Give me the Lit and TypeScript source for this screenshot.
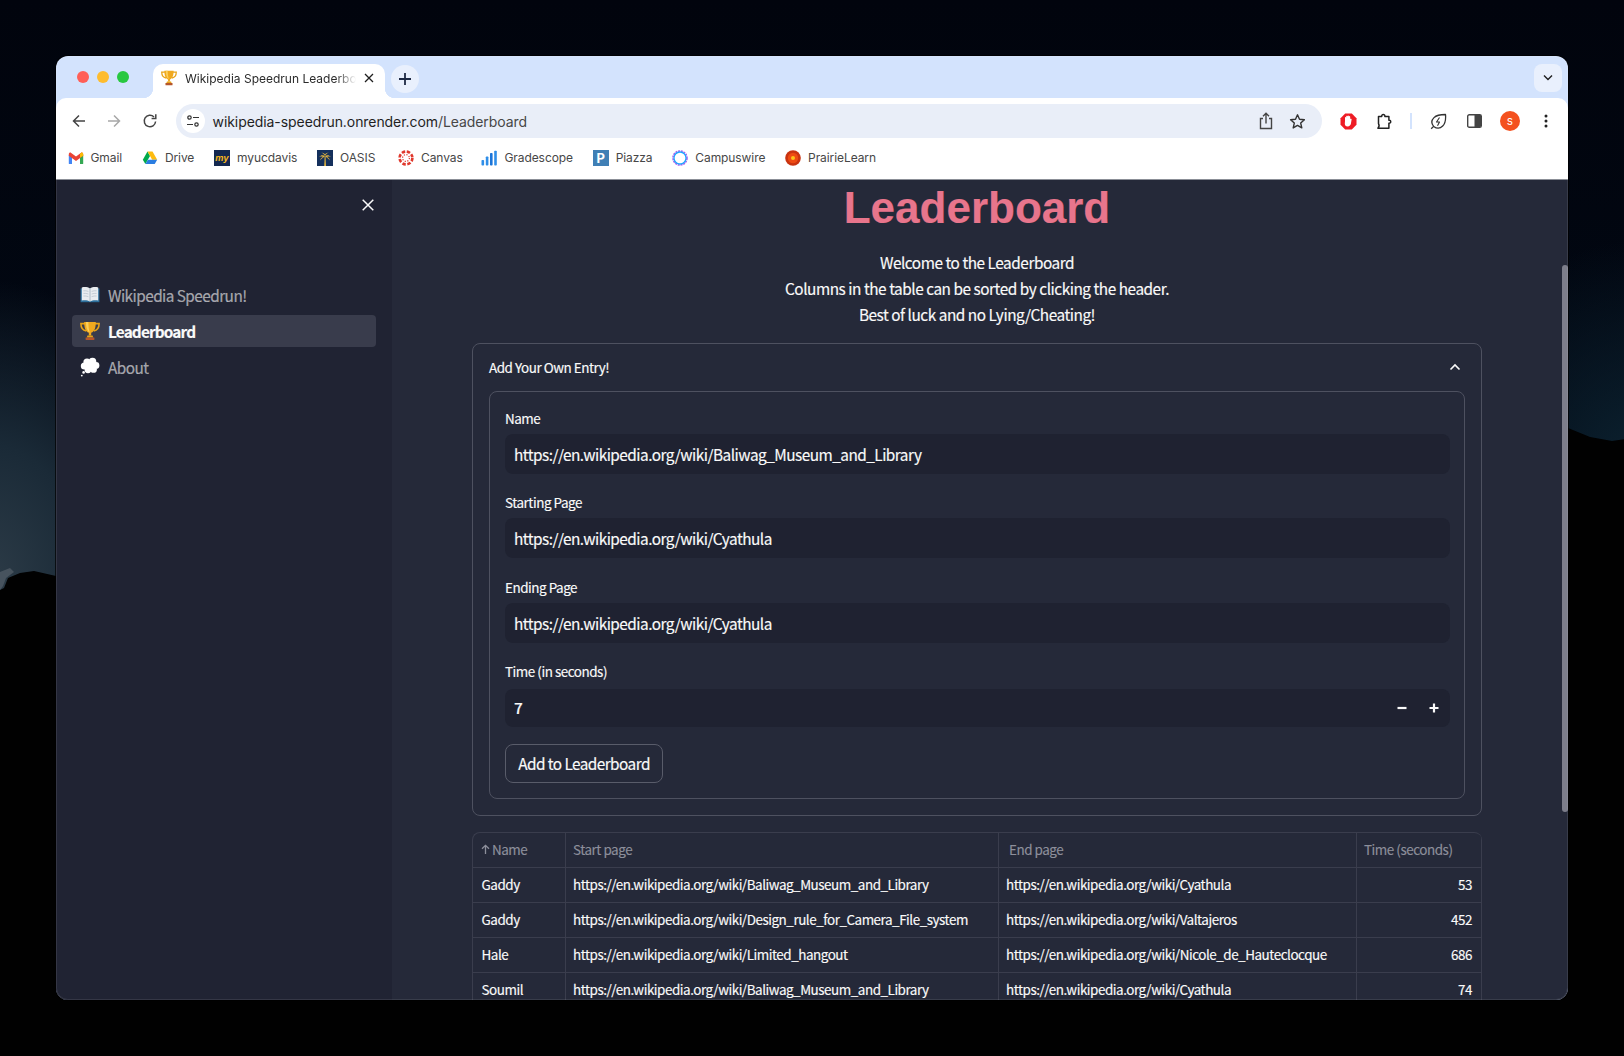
import { LitElement, css, html } from 'lit'
import { customElement, state } from 'lit/decorators.js'

interface Entry {
  name: string
  start: string
  end: string
  time: number
}

const WIKI = 'https://en.wikipedia.org/wiki/'

const ENTRIES: Entry[] = [
  { name: 'Gaddy', start: 'Baliwag_Museum_and_Library', end: 'Cyathula', time: 53 },
  { name: 'Gaddy', start: 'Design_rule_for_Camera_File_system', end: 'Valtajeros', time: 452 },
  { name: 'Hale', start: 'Limited_hangout', end: 'Nicole_de_Hauteclocque', time: 686 },
  { name: 'Soumil', start: 'Baliwag_Museum_and_Library', end: 'Cyathula', time: 74 },
]

const trophy = (size: number) => html`<svg width=${size} height=${size} viewBox="0 0 20 20">
  <path d="M5 2.600H.9c0 4 1.700 6.800 5.300 7.400M15 2.600h4.100c0 4-1.700 6.800-5.300 7.400" fill="none" stroke="#e8a317" stroke-width="1.600"/>
  <path d="M4.200 1h11.600c0 5.400-1 9.600-4.600 10.800v2.600H8.800v-2.600C5.200 10.600 4.200 6.400 4.200 1z" fill="#f0a91e"/>
  <path d="M6 1h2.400c0 4 .4 7.600 1.400 10.600C7 10 6 6 6 1z" fill="#fbcf5c"/>
  <path d="M7.400 14.400h5.200l.6 2H6.800z" fill="#e8a317"/>
  <rect x="5.600" y="16.400" width="8.800" height="2.600" rx=".4" fill="#b5562a"/>
</svg>`

const book = html`<svg width="20" height="20" viewBox="0 0 20 20">
  <path d="M.6 3.400h18.800v13.800H.6z" fill="#2d6f9c"/>
  <path d="M1.800 2.400c3-.6 6-.4 8.200 1 2.200-1.400 5.200-1.600 8.200-1v13c-3-.5-6-.3-8.200 1-2.200-1.300-5.200-1.500-8.200-1z" fill="#e9edf0"/>
  <path d="M10 3.400v13" stroke="#9fb0bb" stroke-width=".8"/>
  <path d="M3.400 5.800c1.600-.2 3.200 0 5 .6M3.400 8.400c1.600-.2 3.200 0 5 .6M3.400 11c1.600-.2 3.200 0 5 .6M16.600 5.800c-1.600-.2-3.200 0-5 .6M16.600 8.400c-1.600-.2-3.200 0-5 .6M16.600 11c-1.600-.2-3.200 0-5 .6" stroke="#b4c0c8" stroke-width=".7" fill="none"/>
</svg>`

const balloon = html`<svg width="20" height="20" viewBox="0 0 20 20" fill="#fff">
  <circle cx="7" cy="5" r="3.600"/><circle cx="12.500" cy="4.600" r="3.800"/><circle cx="16" cy="8.400" r="3.400"/>
  <circle cx="13.500" cy="12.400" r="3.400"/><circle cx="8" cy="12.800" r="3.400"/><circle cx="4.400" cy="9" r="3.600"/>
  <circle cx="10" cy="8.400" r="5"/>
  <circle cx="3.600" cy="15.400" r="1.300"/><circle cx="1.800" cy="18.600" r=".9"/>
</svg>`

const bookmarkIcons: Record<string, unknown> = {
  Gmail: html`<svg width="16" height="16" viewBox="0 0 16 16">
    <rect x=".8" y="5" width="3.200" height="9" rx=".6" fill="#4285f4"/>
    <rect x="12" y="5" width="3.200" height="9" rx=".6" fill="#34a853"/>
    <path d="M.8 5.800V4.200c0-1.300 1.400-2 2.400-1.300L8 6.500l4.800-3.600c1-.7 2.400 0 2.400 1.300v1.600L8 11z" fill="#ea4335"/>
    <path d="M12 4v3.800l3.200-2V4.200c0-1.300-1.400-2-2.400-1.300z" fill="#fbbc04"/>
  </svg>`,
  Drive: html`<svg width="16" height="16" viewBox="0 0 16 16">
    <path d="M5.500 1.600L8 6 3.400 14 .8 9.700z" fill="#00a94b"/>
    <path d="M5.500 1.600h5l4.700 8.100h-5z" fill="#fdbb10"/>
    <path d="M3.400 14l2.500-4.300h9.300L12.700 14z" fill="#2a7de1"/>
  </svg>`,
  myucdavis: html`<span class="badge my">my</span>`,
  OASIS: html`<svg width="16" height="16" viewBox="0 0 16 16">
    <rect width="16" height="16" fill="#14305c"/>
    <path d="M7.200 16c.2-3 .4-6 .4-9h1c0 3 .2 6 .4 9z" fill="#e5b53c"/>
    <path d="M8 6.500C6.500 4.800 4 5 2 7c1.600-.6 3-.6 4 0-1.400.4-2.400 1.500-2.800 3.400C4.400 8.800 6 7.600 8 6.500c2 1.100 3.600 2.300 4.800 3.900C12.400 8.500 11.400 7.400 10 7c1-.6 2.400-.6 4 0-2-2-4.500-2.200-6-.5zM8 6C7 4.500 5.800 3.200 4 2.600c1.500.1 3 .7 4 1.900 1-1.200 2.500-1.800 4-1.900C10.200 3.200 9 4.500 8 6z" fill="#e5b53c"/>
  </svg>`,
  Canvas: html`<svg width="16" height="16" viewBox="0 0 16 16" fill="none" stroke="#e0382c">
    <circle cx="8" cy="8" r="6.400" stroke-width="2.600" stroke-dasharray="3.400 1.630"/>
    <circle cx="8" cy="8" r="3.400" stroke-width="1.200" stroke-dasharray="1.200 1.470"/>
  </svg>`,
  Gradescope: html`<svg width="16" height="16" viewBox="0 0 16 16" fill="#2f8ee8">
    <rect x=".5" y="10" width="2.600" height="5.500" rx=".8"/>
    <rect x="4.800" y="6.500" width="2.600" height="9" rx=".8"/>
    <rect x="9" y="3" width="2.600" height="12.500" rx=".8" fill="#1c75d8"/>
    <rect x="13.200" y=".8" width="2.600" height="14.700" rx=".8"/>
  </svg>`,
  Piazza: html`<span class="badge piazza">P</span>`,
  Campuswire: html`<svg width="16" height="16" viewBox="0 0 16 16">
    <circle cx="8" cy="8" r="7" fill="#fff" stroke="#a65cf0" stroke-width="1.600" stroke-dasharray="2 .8"/>
    <circle cx="8" cy="8" r="6" fill="#fff" stroke="#1fa8ff" stroke-width="1.300"/>
  </svg>`,
  PrairieLearn: html`<svg width="16" height="16" viewBox="0 0 16 16">
    <circle cx="8" cy="8" r="7.800" fill="#c93310"/>
    <circle cx="8" cy="8" r="5.200" fill="#ee4a12"/>
    <circle cx="8" cy="8" r="2" fill="#fbc21a"/>
  </svg>`,
}

const BOOKMARKS = Object.keys(bookmarkIcons)

@customElement('app-root')
export class AppRoot extends LitElement {
  @state() private _time = 7

  private _field(label: string, value: string) {
    return html`
      <div class="field">
        <label>${label}</label>
        <div class="input">${value}</div>
      </div>
    `
  }

  private _browserChrome() {
    return html`
      <div class="tabstrip">
        <div class="lights">
          <i style="background:#ff5f57"></i><i style="background:#febc2e"></i><i style="background:#28c840"></i>
        </div>
        <div class="tab">
          ${trophy(16)}
          <span class="tab-title">Wikipedia Speedrun Leaderboard</span>
          <svg class="tab-close" width="10" height="10" viewBox="0 0 10 10" stroke="#1f1f1f" stroke-width="1.300"><path d="M1 1l8 8M9 1l-8 8"/></svg>
        </div>
        <div class="newtab">
          <svg width="14" height="14" viewBox="0 0 14 14" stroke="#1f2a44" stroke-width="1.800"><path d="M7 1v12M1 7h12"/></svg>
        </div>
        <div class="tabsearch">
          <svg width="12" height="8" viewBox="0 0 12 8" fill="none" stroke="#1f1f1f" stroke-width="1.400"><path d="M2 1.500l4 4 4-4"/></svg>
        </div>
      </div>
      <div class="toolbar">
        <div class="tool">
          <svg width="16" height="16" viewBox="0 0 16 16" fill="none" stroke="#444" stroke-width="1.500"><path d="M14 8H2.500M8 2.500L2.500 8 8 13.500"/></svg>
        </div>
        <div class="tool">
          <svg width="16" height="16" viewBox="0 0 16 16" fill="none" stroke="#a8a8a8" stroke-width="1.500"><path d="M2 8h11.500M8 2.500L13.500 8 8 13.500"/></svg>
        </div>
        <div class="tool reload">
          <svg width="16" height="16" viewBox="0 0 16 16" fill="none" stroke="#444" stroke-width="1.500"><path d="M13.600 8.500A5.700 5.700 0 1 1 12 4"/><path d="M13.800 1.200v4.200H9.600" stroke-linejoin="miter"/></svg>
        </div>
        <div class="pill">
          <div class="siteinfo">
            <svg width="14" height="14" viewBox="0 0 14 14" fill="none" stroke="#333" stroke-width="1.200">
              <circle cx="3.500" cy="3.500" r="1.700"/><path d="M7 3.500h6M1 10.500h6"/><circle cx="10.500" cy="10.500" r="1.700"/>
            </svg>
          </div>
          <span class="url">wikipedia-speedrun.onrender.com<span class="url-path">/Leaderboard</span></span>
          <div class="pill-tool">
            <svg width="16" height="18" viewBox="0 0 16 18" fill="none" stroke="#444" stroke-width="1.400"><path d="M5 6.500H2.500v10h11v-10H11M8 11.500V1.500M5 4.200l3-3 3 3"/></svg>
          </div>
          <div class="pill-tool">
            <svg width="17" height="17" viewBox="0 0 17 17" fill="none" stroke="#333" stroke-width="1.400" stroke-linejoin="round"><path d="M8.500 1.800l2 4.500 4.900.5-3.700 3.300 1.100 4.800-4.300-2.500-4.300 2.500 1.100-4.800L1.600 6.800l4.900-.5z"/></svg>
          </div>
        </div>
        <div class="slot">
          <svg width="17" height="17" viewBox="0 0 17 17">
            <path d="M5.200.5h6.600l4.700 4.700v6.600l-4.700 4.700H5.200L.5 11.800V5.200z" fill="#ee1c25"/>
            <path d="M5 8V4.700c0-.9 1.200-.9 1.200 0V3.500c0-.9 1.300-.9 1.300 0v-.3c0-.9 1.400-.9 1.400 0v.5c0-.9 1.300-.9 1.300 0V6c.3-.6 1.600-.4 1.400.5l-.7 4.300c-.3 1.500-1.300 2.600-3.200 2.600-2 0-2.900-1.200-2.900-3z" fill="#fff"/>
          </svg>
        </div>
        <div class="slot">
          <svg width="17" height="17" viewBox="0 0 17 17" fill="none" stroke="#222" stroke-width="1.500" stroke-linejoin="round"><path d="M2.500 3.500h3.200c-.3-2.600 3.500-2.600 3.200 0h4v3.700c2.400-.3 2.400 3.300 0 3v5h-11c1.400-1.500 1.400-3.300.6-4.600H2.500z"/></svg>
        </div>
        <div class="sep"></div>
        <div class="slot">
          <svg width="17" height="17" viewBox="0 0 17 17" fill="none" stroke="#333" stroke-width="1.300" stroke-linejoin="round"><path d="M1.200 15.800l2.400-2.400c-2.400-3-2-6.500.4-8.800C6.600 2 11 1.500 15.500 1.500c.4 4.500-.2 9-2.800 11.500-2.400 2.400-5.800 2.800-9 .4"/><path d="M9.500 4.500l-3 4.500h3l-2 3.800" stroke-width="1.100"/></svg>
        </div>
        <div class="slot">
          <svg width="15" height="14" viewBox="0 0 15 14"><rect x=".7" y=".7" width="13.600" height="12.600" rx="1.600" fill="#fff" stroke="#444" stroke-width="1.400"/><path d="M7.500 1h5.300c.8 0 1.200.5 1.200 1.200v9.600c0 .7-.4 1.200-1.200 1.200H7.500z" fill="#444"/></svg>
        </div>
        <div class="slot"><span class="avatar">S</span></div>
        <div class="slot">
          <svg width="4" height="14" viewBox="0 0 4 14" fill="#222"><circle cx="2" cy="2" r="1.500"/><circle cx="2" cy="7" r="1.500"/><circle cx="2" cy="12" r="1.500"/></svg>
        </div>
      </div>
      <div class="bookmarks">
        ${BOOKMARKS.map(
          (name) => html`<div class="bookmark">${bookmarkIcons[name]}<span>${name}</span></div>`,
        )}
      </div>
    `
  }

  private _sidebar() {
    return html`
      <aside class="sidebar">
        <div class="close">
          <svg width="12" height="12" viewBox="0 0 12 12" stroke="#fafafa" stroke-width="1.500"><path d="M.7.700l10.600 10.600M11.300.700L.7 11.300"/></svg>
        </div>
        <nav>
          <a class="nav-item">${book}<span>Wikipedia Speedrun!</span></a>
          <a class="nav-item active">${trophy(20)}<span>Leaderboard</span></a>
          <a class="nav-item">${balloon}<span>About</span></a>
        </nav>
      </aside>
    `
  }

  private _table() {
    return html`
      <div class="table">
        <div class="cell head name-head">
          <svg width="9" height="10" viewBox="0 0 9 10" fill="none" stroke="#8d8f9b" stroke-width="1.300"><path d="M4.500 10V1.500M1 4.800l3.500-3.500L8 4.800"/></svg>Name
        </div>
        <div class="cell head">Start page</div>
        <div class="cell head end-head">End page</div>
        <div class="cell head">Time (seconds)</div>
        ${ENTRIES.map(
          (e) => html`
            <div class="cell first">${e.name}</div>
            <div class="cell">${WIKI + e.start}</div>
            <div class="cell">${WIKI + e.end}</div>
            <div class="cell num">${e.time}</div>
          `,
        )}
      </div>
    `
  }

  render() {
    return html`
      <div class="desktop">
        <svg class="hills" width="1624" height="1056" viewBox="0 0 1624 1056">
          <path d="M0 590l4-2 4-10 12-5 14-2 22 5 1512-148 22 9 22 4 14-2V1056H0z" fill="#010101"/>
          <path d="M0 572l10-4 4 4-8 6-3 8-3 4z" fill="#5b6670" opacity=".6"/>
        </svg>
        <div class="window">
          ${this._browserChrome()}
          <div class="page">
            ${this._sidebar()}
            <main>
              <h1>Leaderboard</h1>
              <p>Welcome to the Leaderboard<br />Columns in the table can be sorted by clicking the header.<br />Best of luck and no Lying/Cheating!</p>
              <section class="expander">
                <header>
                  <span>Add Your Own Entry!</span>
                  <svg width="12" height="8" viewBox="0 0 12 8" fill="none" stroke="#fafafa" stroke-width="1.600"><path d="M1.500 6.500L6 2l4.500 4.500"/></svg>
                </header>
                <div class="form">
                  ${this._field('Name', WIKI + 'Baliwag_Museum_and_Library')}
                  ${this._field('Starting Page', WIKI + 'Cyathula')}
                  ${this._field('Ending Page', WIKI + 'Cyathula')}
                  <div class="field">
                    <label>Time (in seconds)</label>
                    <div class="input number">
                      <span>${this._time}</span>
                      <svg class="step minus" width="10" height="10" viewBox="0 0 10 10" stroke="#fafafa" stroke-width="2.200"><path d="M.5 5h9"/></svg>
                      <svg class="step plus" width="10" height="10" viewBox="0 0 10 10" stroke="#fafafa" stroke-width="2.200"><path d="M.5 5h9M5 .5v9"/></svg>
                    </div>
                  </div>
                  <button>Add to Leaderboard</button>
                </div>
              </section>
              ${this._table()}
            </main>
            <div class="scrollbar"></div>
          </div>
        </div>
      </div>
    `
  }

  static styles = css`
    :host {
      display: block;
      width: 1624px;
      height: 1056px;
      overflow: hidden;
      font-family: 'Noto Sans CJK SC', 'Noto Sans', sans-serif;
      color: #fafafa;
    }

    .desktop {
      position: relative;
      height: 100%;
      box-sizing: border-box;
      padding: 56px;
      background:
        radial-gradient(ellipse 210px 300px at -10px 580px, #2c3b47 0%, #1a2a37 45%, rgba(3, 12, 24, 0) 100%),
        radial-gradient(ellipse 200px 230px at 1640px 470px, #0c2230 0%, rgba(3, 12, 24, 0) 100%),
        linear-gradient(#01040d, #020a16 60%, #000);
    }

    .hills {
      position: absolute;
      left: 0;
      top: 0;
    }

    .window {
      position: relative;
      display: flex;
      flex-direction: column;
      height: 944px;
      border-radius: 12px;
      overflow: hidden;
      background: #d3e3fd;
      box-shadow: 0 0 0 1px rgba(0, 0, 0, 0.7);
    }

    .window::after {
      content: '';
      position: absolute;
      inset: 0;
      border: 1px solid rgba(255, 255, 255, 0.09);
      border-radius: 12px;
      pointer-events: none;
    }

    /* browser chrome */
    .tabstrip {
      display: flex;
      align-items: flex-start;
      height: 42px;
      flex: none;
      padding-right: 6px;
      font-family: Inter, sans-serif;
    }

    .lights {
      display: flex;
      gap: 8px;
      padding: 15px 0 0 21px;
    }

    .lights i {
      width: 12px;
      height: 12px;
      border-radius: 50%;
    }

    .tab {
      position: relative;
      display: flex;
      align-items: center;
      gap: 8px;
      width: 232px;
      height: 34px;
      box-sizing: border-box;
      margin: 8px 0 0 24px;
      padding: 0 11px 6px 8px;
      background: #fff;
      border-radius: 10px 10px 0 0;
      font-size: 12px;
      color: #2b2b2b;
    }

    .tab::before,
    .tab::after {
      content: '';
      position: absolute;
      bottom: 0;
      width: 10px;
      height: 10px;
    }

    .tab::before {
      left: -10px;
      background: radial-gradient(circle at 0 0, transparent 10px, #fff 10.5px);
    }

    .tab::after {
      right: -10px;
      background: radial-gradient(circle at 100% 0, transparent 10px, #fff 10.5px);
    }

    .tab-title {
      flex: 1;
      white-space: nowrap;
      overflow: hidden;
      -webkit-mask-image: linear-gradient(90deg, #000 88%, transparent);
      mask-image: linear-gradient(90deg, #000 88%, transparent);
    }

    .tab-close {
      flex: none;
    }

    .newtab {
      display: flex;
      align-items: center;
      justify-content: center;
      width: 28px;
      height: 28px;
      margin: 9px 0 0 6px;
      border-radius: 50%;
      background: #e9f0fd;
    }

    .tabsearch {
      display: flex;
      align-items: center;
      justify-content: center;
      width: 28px;
      height: 28px;
      margin: 8px 0 0 auto;
      border-radius: 8px;
      background: #e9f0fd;
    }

    .toolbar {
      display: flex;
      align-items: center;
      flex: none;
      height: 42px;
      box-sizing: border-box;
      padding: 6px 4px 2px 8.5px;
      background: #fff;
      border-radius: 10px 10px 0 0;
      font-family: Inter, sans-serif;
    }

    .tool {
      display: flex;
      align-items: center;
      justify-content: center;
      width: 28px;
      margin-right: 7px;
    }

    .tool.reload {
      margin: 0 6px 0 1px;
    }

    .pill {
      display: flex;
      align-items: center;
      flex: 1;
      height: 34px;
      margin: 0 8px 0 6px;
      padding: 0 8.5px 0 5px;
      border-radius: 17px;
      background: #e9eef8;
    }

    .siteinfo {
      display: flex;
      align-items: center;
      justify-content: center;
      width: 24px;
      height: 24px;
      margin-right: 8px;
      border-radius: 50%;
      background: #fff;
    }

    .url {
      flex: 1;
      font-size: 14px;
      letter-spacing: -0.07px;
      color: #1f1f1f;
    }

    .url-path {
      color: #474747;
    }

    .pill-tool {
      display: flex;
      align-items: center;
      justify-content: center;
      width: 32px;
    }

    .slot {
      display: flex;
      align-items: center;
      justify-content: center;
      width: 36px;
    }

    .sep {
      width: 2px;
      height: 16px;
      margin: 0 8px;
      background: #d3e3fd;
    }

    .avatar {
      display: flex;
      align-items: center;
      justify-content: center;
      width: 20px;
      height: 20px;
      border-radius: 50%;
      background: #f4511e;
      color: #fff;
      font-size: 9px;
      font-weight: 500;
    }

    .bookmarks {
      display: flex;
      align-items: center;
      gap: 19.75px;
      flex: none;
      height: 40px;
      box-sizing: border-box;
      padding: 0 0 4px 11.5px;
      background: #fff;
      border-bottom: 1px solid #8b8f97;
      font-family: Inter, sans-serif;
      font-size: 12px;
      letter-spacing: -0.08px;
      color: #474747;
    }

    .bookmark {
      display: flex;
      align-items: center;
      gap: 7px;
    }

    .bookmark:nth-child(5) {
      margin: 0 -1px 0 3px;
    }

    .badge {
      display: block;
      width: 16px;
      height: 16px;
      text-align: center;
      font-weight: 700;
    }

    .my {
      background: #14284f;
      color: #f2b51d;
      font-size: 9px;
      line-height: 15px;
      font-style: italic;
    }

    .piazza {
      background: #3f7fb5;
      color: #fff;
      font-size: 13px;
      line-height: 16px;
    }

    /* streamlit page: the CJK family carries Source Sans latin, set a bit tighter here */
    .page {
      position: relative;
      display: flex;
      flex: 1;
      min-height: 0;
      background: #252939;
      letter-spacing: -0.029em;
      -webkit-text-stroke: 0.15px;
    }

    .sidebar {
      flex: none;
      width: 336px;
      background: #202333;
    }

    .close {
      display: flex;
      justify-content: flex-end;
      padding: 19px 18px 0 0;
    }

    .close svg {
      display: block;
    }

    nav {
      display: flex;
      flex-direction: column;
      gap: 4px;
      margin: 68px 16px 0;
    }

    .nav-item {
      display: flex;
      align-items: center;
      gap: 8px;
      height: 32px;
      padding-left: 8px;
      border-radius: 4px;
      font-size: 15.36px;
      line-height: 24px;
      letter-spacing: -0.036em;
      color: rgba(250, 250, 250, 0.6);
    }

    .nav-item.active {
      background: #393c4c;
      color: #fafafa;
      font-weight: 700;
      letter-spacing: -0.056em;
    }

    main {
      flex: 1;
      min-width: 0;
      padding-right: 86px;
      padding-left: 80px;
      overflow: hidden;
    }

    h1 {
      margin: 0 0 14.4px;
      font: 700 44px/56px 'Liberation Sans', Arial, sans-serif;
      letter-spacing: normal;
      text-align: center;
      color: #e8758c;
    }

    p {
      margin: 0 0 15.5px;
      font-size: 15.36px;
      line-height: 25.6px;
      text-align: center;
    }

    .expander {
      box-sizing: border-box;
      padding: 0 16px 16px;
      border: 1px solid #4e5160;
      border-radius: 8px;
    }

    .expander header {
      display: flex;
      align-items: center;
      justify-content: space-between;
      height: 47px;
      padding-right: 4px;
      font-size: 13.45px;
      line-height: 20px;
    }

    .form {
      display: flex;
      flex-direction: column;
      align-items: flex-start;
      gap: 18.5px;
      padding: 16px 14px 15px 15px;
      border: 1px solid #4e5160;
      border-radius: 8px;
    }

    .field {
      align-self: stretch;
    }

    label {
      display: block;
      margin-bottom: 6px;
      font-size: 13.45px;
      line-height: 20px;
    }

    .input {
      display: flex;
      align-items: center;
      height: 40px;
      padding: 0 8px 0 9px;
      border-radius: 8px;
      background: #1f2231;
      font-size: 15.36px;
      letter-spacing: -0.0335em;
    }

    .input.number {
      height: 38px;
      margin-top: 8px;
      font-weight: 500;
    }

    .input.number span {
      flex: 1;
      padding-bottom: 2px;
    }

    .step.minus {
      margin-right: 22px;
    }

    .step.plus {
      margin-right: 3px;
    }

    button {
      height: 39px;
      width: 158px;
      margin-top: -2px;
      padding: 0;
      border: 1px solid #595c6a;
      border-radius: 8px;
      background: #252939;
      color: #fafafa;
      font: 15.36px 'Noto Sans CJK SC', sans-serif;
      letter-spacing: -0.036em;
      -webkit-text-stroke: 0.15px;
    }

    .table {
      display: grid;
      grid-template-columns: 93px 433px 358px 125px;
      grid-auto-rows: 35px;
      margin-top: 16px;
      border-top: 1px solid #3a3d4d;
      border-left: 1px solid #3a3d4d;
      border-radius: 8px 8px 0 0;
      font-size: 13.45px;
      overflow: hidden;
    }

    .cell {
      box-sizing: border-box;
      display: flex;
      align-items: center;
      padding: 0 7px 1px;
      border-right: 1px solid #3a3d4d;
      border-bottom: 1px solid #3a3d4d;
      white-space: nowrap;
      overflow: hidden;
    }

    .head {
      color: #8d8f9b;
    }

    .name-head {
      gap: 2px;
      padding-left: 8px;
    }

    .end-head {
      padding-left: 10px;
    }

    .first {
      padding-left: 8.5px;
    }

    .num {
      justify-content: flex-end;
      padding-right: 9px;
    }

    .scrollbar {
      position: absolute;
      top: 85px;
      right: 0;
      width: 6px;
      height: 547px;
      border-radius: 3px;
      background: #7d7e8b;
    }
  `
}
